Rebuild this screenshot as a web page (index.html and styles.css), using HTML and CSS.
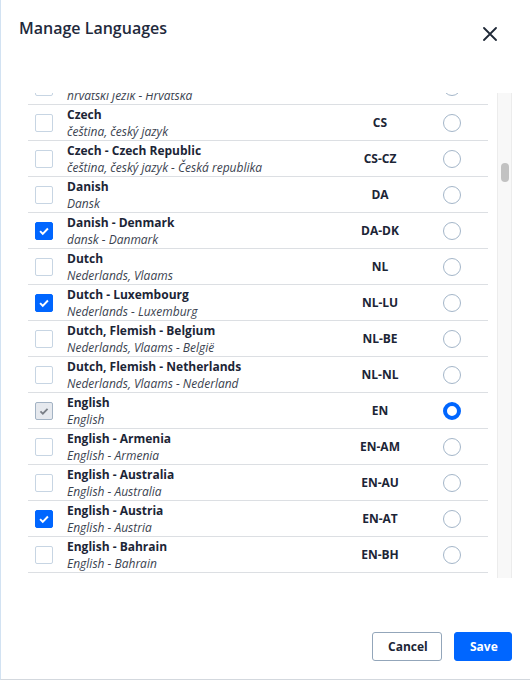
FILE: index.html
```html
<!DOCTYPE html>
<html lang="en">
<head>
    <meta charset="UTF-8">
    <meta name="viewport" content="width=device-width, initial-scale=1.0">
    <title>Manage Languages</title>
    <link rel="stylesheet" href="styles.css">
</head>
<body>
    <div class="modal">
        <header class="modal-header">
            <h1 class="modal-title">Manage Languages</h1>
            <button class="close-btn" aria-label="Close">
                <svg width="14" height="14" viewBox="0 0 14 14">
                    <path d="M1 1 L13 13 M13 1 L1 13" stroke="#1f2937" stroke-width="1.8" stroke-linecap="round" fill="none"/>
                </svg>
            </button>
        </header>

        <div class="lang-area">
            <div class="lang-list">
                <div class="lang-rows">
                    <div class="lang-row">
                        <span class="check"></span>
                        <div class="lang-text">
                            <div class="lang-name">Croatian - Croatia</div>
                            <div class="lang-native">hrvatski jezik - Hrvatska</div>
                        </div>
                        <div class="lang-code">HR-HR</div>
                        <span class="radio"></span>
                    </div>
                    <div class="lang-row">
                        <span class="check"></span>
                        <div class="lang-text">
                            <div class="lang-name">Czech</div>
                            <div class="lang-native">čeština, český jazyk</div>
                        </div>
                        <div class="lang-code">CS</div>
                        <span class="radio"></span>
                    </div>
                    <div class="lang-row">
                        <span class="check"></span>
                        <div class="lang-text">
                            <div class="lang-name">Czech - Czech Republic</div>
                            <div class="lang-native">čeština, český jazyk - Česká republika</div>
                        </div>
                        <div class="lang-code">CS-CZ</div>
                        <span class="radio"></span>
                    </div>
                    <div class="lang-row">
                        <span class="check"></span>
                        <div class="lang-text">
                            <div class="lang-name">Danish</div>
                            <div class="lang-native">Dansk</div>
                        </div>
                        <div class="lang-code">DA</div>
                        <span class="radio"></span>
                    </div>
                    <div class="lang-row">
                        <span class="check is-on">
                            <svg viewBox="0 0 18 18"><path d="M4.6 9.2 L7.6 12.2 L13.4 6.2" /></svg>
                        </span>
                        <div class="lang-text">
                            <div class="lang-name">Danish - Denmark</div>
                            <div class="lang-native">dansk - Danmark</div>
                        </div>
                        <div class="lang-code">DA-DK</div>
                        <span class="radio"></span>
                    </div>
                    <div class="lang-row">
                        <span class="check"></span>
                        <div class="lang-text">
                            <div class="lang-name">Dutch</div>
                            <div class="lang-native">Nederlands, Vlaams</div>
                        </div>
                        <div class="lang-code">NL</div>
                        <span class="radio"></span>
                    </div>
                    <div class="lang-row">
                        <span class="check is-on">
                            <svg viewBox="0 0 18 18"><path d="M4.6 9.2 L7.6 12.2 L13.4 6.2" /></svg>
                        </span>
                        <div class="lang-text">
                            <div class="lang-name">Dutch - Luxembourg</div>
                            <div class="lang-native">Nederlands - Luxemburg</div>
                        </div>
                        <div class="lang-code">NL-LU</div>
                        <span class="radio"></span>
                    </div>
                    <div class="lang-row">
                        <span class="check"></span>
                        <div class="lang-text">
                            <div class="lang-name">Dutch, Flemish - Belgium</div>
                            <div class="lang-native">Nederlands, Vlaams - België</div>
                        </div>
                        <div class="lang-code">NL-BE</div>
                        <span class="radio"></span>
                    </div>
                    <div class="lang-row">
                        <span class="check"></span>
                        <div class="lang-text">
                            <div class="lang-name">Dutch, Flemish - Netherlands</div>
                            <div class="lang-native">Nederlands, Vlaams - Nederland</div>
                        </div>
                        <div class="lang-code">NL-NL</div>
                        <span class="radio"></span>
                    </div>
                    <div class="lang-row">
                        <span class="check is-locked">
                            <svg viewBox="0 0 18 18"><path d="M5 9.4 L7.7 12 L13 6.6" /></svg>
                        </span>
                        <div class="lang-text">
                            <div class="lang-name">English</div>
                            <div class="lang-native">English</div>
                        </div>
                        <div class="lang-code">EN</div>
                        <span class="radio is-default"></span>
                    </div>
                    <div class="lang-row">
                        <span class="check"></span>
                        <div class="lang-text">
                            <div class="lang-name">English - Armenia</div>
                            <div class="lang-native">English - Armenia</div>
                        </div>
                        <div class="lang-code">EN-AM</div>
                        <span class="radio"></span>
                    </div>
                    <div class="lang-row">
                        <span class="check"></span>
                        <div class="lang-text">
                            <div class="lang-name">English - Australia</div>
                            <div class="lang-native">English - Australia</div>
                        </div>
                        <div class="lang-code">EN-AU</div>
                        <span class="radio"></span>
                    </div>
                    <div class="lang-row">
                        <span class="check is-on">
                            <svg viewBox="0 0 18 18"><path d="M4.6 9.2 L7.6 12.2 L13.4 6.2" /></svg>
                        </span>
                        <div class="lang-text">
                            <div class="lang-name">English - Austria</div>
                            <div class="lang-native">English - Austria</div>
                        </div>
                        <div class="lang-code">EN-AT</div>
                        <span class="radio"></span>
                    </div>
                    <div class="lang-row">
                        <span class="check"></span>
                        <div class="lang-text">
                            <div class="lang-name">English - Bahrain</div>
                            <div class="lang-native">English - Bahrain</div>
                        </div>
                        <div class="lang-code">EN-BH</div>
                        <span class="radio"></span>
                    </div>
                </div>
            </div>

            <div class="scroll-track">
                <div class="scroll-thumb"></div>
            </div>
        </div>

        <footer class="modal-footer">
            <button class="btn btn-outline">Cancel</button>
            <button class="btn btn-primary">Save</button>
        </footer>
    </div>
</body>
</html>
```

FILE: styles.css
```css
:root {
    --primary-color: #0066ff;
    --text-color: #1c2536;
    --muted-text: #3b4350;
    --line-color: #dcdfe3;
    --control-border: #c7d5e3;
}

* {
    margin: 0;
    padding: 0;
    box-sizing: border-box;
}

body {
    font-family: "Open Sans", "Noto Sans", sans-serif;
    color: var(--text-color);
    background-color: #ffffff;
}

.modal {
    width: 530px;
    height: 680px;
    background-color: #ffffff;
    border-left: 1px solid #d2e2f2;
    border-bottom: 1px solid #d3d8de;
    display: flex;
    flex-direction: column;
}

/* header */

.modal-header {
    height: 93px;
    display: flex;
    justify-content: space-between;
    align-items: flex-start;
    padding: 17px 33px 0 18px;
}

.modal-title {
    font-size: 16px;
    line-height: 22px;
    font-weight: 600;
    color: #1f2a3c;
}

.close-btn {
    margin-top: 10px;
    border: none;
    background: none;
    cursor: pointer;
    display: flex;
}

/* language list */

.lang-area {
    height: 485px;
    display: flex;
    align-items: flex-start;
    gap: 9px;
    padding-left: 27px;
}

.lang-list {
    width: 460px;
    height: 480px;
    overflow: hidden;
}

.lang-rows {
    /* list is scrolled part way down */
    margin-top: -24px;
}

.lang-row {
    height: 36px;
    display: flex;
    align-items: center;
    padding: 0 27px 0 7px;
    border-bottom: 1px solid var(--line-color);
}

.check {
    width: 18px;
    height: 18px;
    flex-shrink: 0;
    margin-right: 14px;
    border: 1px solid var(--control-border);
    border-radius: 2px;
    background-color: #ffffff;
    display: flex;
}

.check svg {
    width: 100%;
    height: 100%;
    fill: none;
    stroke: #ffffff;
    stroke-width: 2.2;
}

.check.is-on {
    background-color: var(--primary-color);
    border-color: var(--primary-color);
}

.check.is-locked {
    background-color: #e6e9ee;
    border-color: #a3b3c4;
}

.check.is-locked svg {
    stroke: #7a7f87;
    stroke-width: 2;
}

.lang-text {
    flex: 1;
    min-width: 0;
}

.lang-name {
    font-size: 12px;
    line-height: 17px;
    font-weight: 700;
    color: var(--text-color);
}

.lang-native {
    font-size: 12px;
    line-height: 17px;
    font-style: italic;
    color: var(--muted-text);
}

.lang-code {
    width: 80px;
    margin-right: 23px;
    text-align: center;
    font-size: 12px;
    font-weight: 700;
    color: var(--text-color);
}

.radio {
    width: 18px;
    height: 18px;
    flex-shrink: 0;
    border: 1px solid #a4b6c9;
    border-radius: 50%;
    background-color: #ffffff;
}

.radio.is-default {
    border: 4px solid var(--primary-color);
}

.scroll-track {
    width: 15px;
    height: 485px;
    background-color: #f8f8f8;
    border-left: 1px solid #ececec;
    border-right: 1px solid #ececec;
    padding: 70px 0 0 3px;
}

.scroll-thumb {
    width: 8px;
    height: 19px;
    border-radius: 4px;
    background-color: #c2c2c2;
}

/* footer */

.modal-footer {
    display: flex;
    justify-content: flex-end;
    gap: 12px;
    padding: 54px 18px 0 0;
}

.btn {
    height: 29px;
    padding: 0 15px;
    font-family: inherit;
    font-size: 12px;
    font-weight: 700;
    border-radius: 3px;
    cursor: pointer;
}

.btn-outline {
    width: 70px;
    background-color: #ffffff;
    color: var(--text-color);
    border: 1px solid #93a6ba;
}

.btn-primary {
    width: 58px;
    background-color: var(--primary-color);
    color: #ffffff;
    border: 1px solid var(--primary-color);
}
```
